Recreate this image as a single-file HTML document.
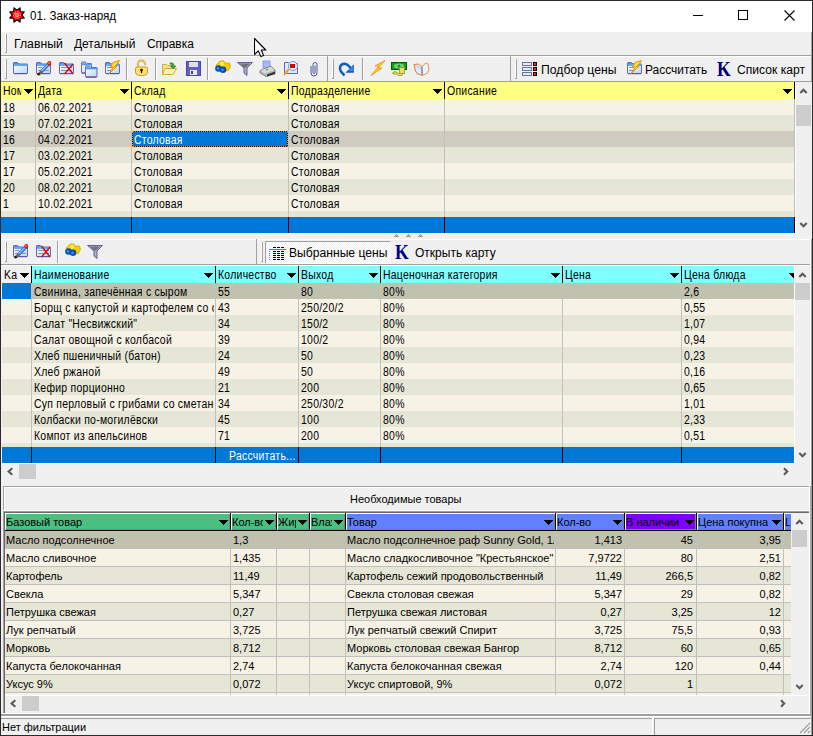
<!DOCTYPE html>
<html><head><meta charset="utf-8"><title>01. Заказ-наряд</title>
<style>
html,body{margin:0;padding:0;}
body{width:813px;height:736px;overflow:hidden;position:relative;background:#F0F0F0;font-family:'Liberation Sans', sans-serif;}
body>div{position:absolute;}
.t{position:absolute;white-space:nowrap;}
</style></head><body>
<div style="left:0px;top:0px;width:813px;height:736px;background:#F0F0F0;"></div>
<div style="left:1px;top:1px;width:811px;height:31px;background:#FFFFFF;"></div>
<svg style="position:absolute;left:8.5px;top:6.5px" width="16" height="16" viewBox="0 0 16 16"><polygon points="8.00,3.10 10.95,0.89 11.46,4.54 15.11,5.05 12.90,8.00 15.11,10.95 11.46,11.46 10.95,15.11 8.00,12.90 5.05,15.11 4.54,11.46 0.89,10.95 3.10,8.00 0.89,5.05 4.54,4.54 5.05,0.89" fill="#FF0000" stroke="#000" stroke-width="1.1" stroke-linejoin="miter"/>
<circle cx="8" cy="8" r="3.3" fill="none" stroke="#fff" stroke-width="0.9" stroke-dasharray="1.1 1.1"/>
<rect x="6.8" y="6.8" width="2.4" height="2.4" fill="none" stroke="#fff" stroke-width="0.8"/></svg>
<div class="t" style="left:30px;top:5.67px;font-size:12.5px;line-height:20px;color:#000;text-align:left;font-family:'Liberation Sans', sans-serif;transform:scaleX(0.93);transform-origin:left top;">01. Заказ-наряд</div>
<div style="left:693px;top:15px;width:10px;height:1px;background:#000;"></div>
<div style="left:738px;top:10px;width:10px;height:10px;background:transparent;box-sizing:border-box;border:1px solid #000;"></div>
<svg style="position:absolute;left:784px;top:10px" width="11" height="11" viewBox="0 0 11 11"><path d="M0.5 0.5 L10.5 10.5 M10.5 0.5 L0.5 10.5" stroke="#000" stroke-width="1.1"/></svg>
<div style="left:5px;top:34px;width:1px;height:19px;background:#FFFFFF;"></div>
<div style="left:6px;top:34px;width:1px;height:19px;background:#A0A0A0;"></div>
<div style="left:5px;top:52px;width:2px;height:1px;background:#A0A0A0;"></div>
<div class="t" style="left:14px;top:33.67px;font-size:12.5px;line-height:20px;color:#000;text-align:left;font-family:'Liberation Sans', sans-serif;transform:scaleX(0.98);transform-origin:left top;">Главный</div>
<div class="t" style="left:74px;top:33.67px;font-size:12.5px;line-height:20px;color:#000;text-align:left;font-family:'Liberation Sans', sans-serif;transform:scaleX(0.955);transform-origin:left top;">Детальный</div>
<div class="t" style="left:147px;top:33.67px;font-size:12.5px;line-height:20px;color:#000;text-align:left;font-family:'Liberation Sans', sans-serif;transform:scaleX(0.955);transform-origin:left top;">Справка</div>
<div style="left:1px;top:55px;width:811px;height:1px;background:#A0A0A0;"></div>
<div style="left:1px;top:56px;width:811px;height:1px;background:#FFFFFF;"></div>
<div style="left:5px;top:59px;width:1px;height:20px;background:#FFFFFF;"></div>
<div style="left:6px;top:59px;width:1px;height:20px;background:#A0A0A0;"></div>
<div style="left:5px;top:78px;width:2px;height:1px;background:#A0A0A0;"></div>
<svg style="position:absolute;left:12px;top:60px" width="16" height="16" viewBox="0 0 16 16"><defs><linearGradient id="fg" x1="0" y1="0" x2="1" y2="1"><stop offset="0" stop-color="#FFFFFF"/><stop offset="1" stop-color="#B8D8F4"/></linearGradient></defs><path d="M1.5 5 V3 Q1.5 2.5 2 2.5 H5.5 L7 4 H15.0 Q15.5 4 15.5 4.5 V13 Q15.5 13.5 15.0 13.5 H2 Q1.5 13.5 1.5 13 Z" fill="url(#fg)" stroke="#6A64B8" stroke-width="1"/><rect x="2" y="3" width="4" height="1.2" fill="#4A98F4"/><rect x="2" y="4.2" width="14" height="1.6" fill="#4A98F4"/><path d="M2 13.6 H15.0" stroke="#5A54A8" stroke-width="1.2"/></svg>
<svg style="position:absolute;left:35px;top:60px" width="16" height="16" viewBox="0 0 16 16"><defs><linearGradient id="fg" x1="0" y1="0" x2="1" y2="1"><stop offset="0" stop-color="#FFFFFF"/><stop offset="1" stop-color="#B8D8F4"/></linearGradient></defs><path d="M1.5 5 V3 Q1.5 2.5 2 2.5 H5.5 L7 4 H15.0 Q15.5 4 15.5 4.5 V13 Q15.5 13.5 15.0 13.5 H2 Q1.5 13.5 1.5 13 Z" fill="url(#fg)" stroke="#6A64B8" stroke-width="1"/><rect x="2" y="3" width="4" height="1.2" fill="#4A98F4"/><rect x="2" y="4.2" width="14" height="1.6" fill="#4A98F4"/><path d="M2 13.6 H15.0" stroke="#5A54A8" stroke-width="1.2"/><path d="M3 7.5h4M3 10.5h4M10 10.5h4" stroke="#909090" stroke-width="1"/><path d="M6 12 L14 4" stroke="#3A78D8" stroke-width="3.4"/><path d="M6.3 11.2 L13.6 3.9" stroke="#8CC0F8" stroke-width="1.2"/><path d="M4 14 L6.5 11.5" stroke="#806030" stroke-width="2.6"/><circle cx="3.6" cy="14.2" r="1.3" fill="#202020"/><circle cx="14.5" cy="3.3" r="2.3" fill="#D81808"/><circle cx="14" cy="3" r="0.9" fill="#FF8040"/></svg>
<svg style="position:absolute;left:58px;top:60px" width="16" height="16" viewBox="0 0 16 16"><defs><linearGradient id="fg" x1="0" y1="0" x2="1" y2="1"><stop offset="0" stop-color="#FFFFFF"/><stop offset="1" stop-color="#B8D8F4"/></linearGradient></defs><path d="M1.5 5 V3 Q1.5 2.5 2 2.5 H5.5 L7 4 H15.0 Q15.5 4 15.5 4.5 V13 Q15.5 13.5 15.0 13.5 H2 Q1.5 13.5 1.5 13 Z" fill="url(#fg)" stroke="#6A64B8" stroke-width="1"/><rect x="2" y="3" width="4" height="1.2" fill="#4A98F4"/><rect x="2" y="4.2" width="14" height="1.6" fill="#4A98F4"/><path d="M2 13.6 H15.0" stroke="#5A54A8" stroke-width="1.2"/><path d="M3 7.5h11M3 10.5h11" stroke="#909090" stroke-width="1"/><path d="M6.5 3 L15 14 M15 4 L6.5 14" stroke="#E80000" stroke-width="1.3"/></svg>
<svg style="position:absolute;left:80px;top:60px" width="18" height="19" viewBox="0 0 18 19"><defs><linearGradient id="fg" x1="0" y1="0" x2="1" y2="1"><stop offset="0" stop-color="#FFFFFF"/><stop offset="1" stop-color="#B8D8F4"/></linearGradient></defs><path d="M1.5 4.5 V2.5 Q1.5 2.0 2 2.0 H5.5 L7 3.5 H11.0 Q11.5 3.5 11.5 4.0 V12.5 Q11.5 13.0 11.0 13.0 H2 Q1.5 13.0 1.5 12.5 Z" fill="url(#fg)" stroke="#6A64B8" stroke-width="1"/><rect x="2" y="2.5" width="4" height="1.2" fill="#4A98F4"/><rect x="2" y="3.7" width="10" height="1.6" fill="#4A98F4"/><path d="M2 13.1 H11.0" stroke="#5A54A8" stroke-width="1.2"/><path d="M5.5 8.5 V6.5 Q5.5 6.0 6 6.0 H9.5 L11 7.5 H16.5 Q17.0 7.5 17.0 8.0 V16.5 Q17.0 17.0 16.5 17.0 H6 Q5.5 17.0 5.5 16.5 Z" fill="url(#fg)" stroke="#6A64B8" stroke-width="1"/><rect x="6" y="6.5" width="4" height="1.2" fill="#4A98F4"/><rect x="6" y="7.7" width="11.5" height="1.6" fill="#4A98F4"/><path d="M6 17.1 H16.5" stroke="#5A54A8" stroke-width="1.2"/></svg>
<svg style="position:absolute;left:104px;top:60px" width="16" height="16" viewBox="0 0 16 16"><defs><linearGradient id="fg" x1="0" y1="0" x2="1" y2="1"><stop offset="0" stop-color="#FFFFFF"/><stop offset="1" stop-color="#B8D8F4"/></linearGradient></defs><path d="M1.5 5 V3 Q1.5 2.5 2 2.5 H5.5 L7 4 H15.0 Q15.5 4 15.5 4.5 V13 Q15.5 13.5 15.0 13.5 H2 Q1.5 13.5 1.5 13 Z" fill="url(#fg)" stroke="#6A64B8" stroke-width="1"/><rect x="2" y="3" width="4" height="1.2" fill="#4A98F4"/><rect x="2" y="4.2" width="14" height="1.6" fill="#4A98F4"/><path d="M2 13.6 H15.0" stroke="#5A54A8" stroke-width="1.2"/><path d="M3 7.5h5M3 10.5h5" stroke="#909090" stroke-width="1"/><polygon points="15.5,0.5 9,2.5 6.5,7 9.5,7 5,13.5 13,6.5 10.5,6.5 14,3" fill="#FFE820" stroke="#F08A10" stroke-width="1"/></svg>
<div style="left:126px;top:58px;width:1px;height:22px;background:#A0A0A0;"></div>
<div style="left:127px;top:58px;width:1px;height:22px;background:#FFFFFF;"></div>
<svg style="position:absolute;left:133px;top:59px" width="17" height="18" viewBox="0 0 17 18"><path d="M5 8 V5 a3.5 3.5 0 0 1 7 0 V6" fill="none" stroke="#C89A20" stroke-width="2"/><path d="M5 8 V5 a3.5 3.5 0 0 1 7 0 V6" fill="none" stroke="#FFE890" stroke-width="0.8"/><path d="M2.5 9.5 Q2.5 8 4 8 H13 Q14.5 8 14.5 9.5 V13 Q14.5 16.5 8.5 16.5 Q2.5 16.5 2.5 13 Z" fill="#FFE070" stroke="#C89A20" stroke-width="1"/><circle cx="8.5" cy="11" r="1.3" fill="#000"/><rect x="7.9" y="11" width="1.2" height="3" fill="#000"/></svg>
<div style="left:155px;top:58px;width:1px;height:22px;background:#A0A0A0;"></div>
<div style="left:156px;top:58px;width:1px;height:22px;background:#FFFFFF;"></div>
<svg style="position:absolute;left:161px;top:60px" width="16" height="16" viewBox="0 0 16 16"><path d="M1.5 4.5 h4 l1 1 h5 v9 h-10 z" fill="#F8E090" stroke="#C8B040" stroke-width="1"/><path d="M1.5 14.5 L4 8.5 H15.5 L12 14.5 Z" fill="#FFF0B0" stroke="#C8B040" stroke-width="1"/><path d="M9 3 Q13 2 13 6 L15 6 L12 9 L9.5 6 L11 6 Q11 4 9 4 Z" fill="#30B030" stroke="#208020" stroke-width="0.6"/></svg>
<svg style="position:absolute;left:185px;top:60px" width="16" height="16" viewBox="0 0 16 16"><rect x="1.5" y="1.5" width="14" height="14" fill="#6060C8" stroke="#4848A0" stroke-width="1"/><rect x="4" y="2" width="9" height="5" fill="#E0E0E8"/><rect x="5" y="10" width="7" height="5" fill="#E8E8F0"/><rect x="6" y="11" width="2" height="3" fill="#404090"/></svg>
<div style="left:207px;top:58px;width:1px;height:22px;background:#A0A0A0;"></div>
<div style="left:208px;top:58px;width:1px;height:22px;background:#FFFFFF;"></div>
<svg style="position:absolute;left:212px;top:58px" width="20" height="20" viewBox="0 0 20 20"><path d="M4 7 L8 3 H12 L13 5 H17.5 L18.5 8 L16.5 12.5 L11 13 L5 10 Z" fill="#F5CC00" stroke="#D0A000" stroke-width="0.7"/><path d="M8 4 H11.5 L12 7 L9 8 Z" fill="#FFF060"/><circle cx="6.5" cy="10.5" r="3.3" fill="#0E4AA8"/><circle cx="11" cy="11.8" r="3.3" fill="#0E4AA8"/><circle cx="6" cy="10.5" r="1.4" fill="#2A90F0"/><circle cx="10.5" cy="12" r="1.4" fill="#2A90F0"/></svg>
<svg style="position:absolute;left:237px;top:61px" width="16" height="15" viewBox="0 0 16 15"><path d="M0.5 1.5 H15.5 L10 7 V14.5 L7 12 V7 Z" fill="#B0B0B8" stroke="#6060A0" stroke-width="1"/><path d="M3 2.5 H13 L9 6.5 H7 Z" fill="#707078"/></svg>
<svg style="position:absolute;left:259px;top:59px" width="17" height="18" viewBox="0 0 17 18"><rect x="4" y="2" width="7" height="7" fill="#A8B8F8" stroke="#8090D8" stroke-width="0.8"/><polygon points="1,11.5 12,7 16,11 16,15 7,17.5 1,14" fill="#B8B8B8" stroke="#707070" stroke-width="0.8"/><polygon points="1.5,11.5 12,7.5 15.5,11 6,14.5" fill="#D8D8D8"/><polygon points="8,15.5 16,12.5 16,14.8 8,17.5" fill="#303030"/><circle cx="8" cy="10.5" r="0.9" fill="#30C030"/></svg>
<svg style="position:absolute;left:283px;top:59px" width="16" height="17" viewBox="0 0 16 17"><path d="M1.5 3.5 h4 l1 1 h8 v10 h-13 z" fill="#DDEBFF" stroke="#6464B4" stroke-width="1"/><circle cx="10" cy="7" r="4.5" fill="#E8F4FF" stroke="#5AA0E8" stroke-width="1"/><rect x="7" y="5" width="5" height="4" fill="#E00000"/><path d="M1 16 L6 10" stroke="#F0A020" stroke-width="2"/></svg>
<svg style="position:absolute;left:309px;top:60px" width="11" height="17" viewBox="0 0 11 17"><path d="M6 5.5 V12.5 a1 1 0 0 1 -2 0 V4.5 a2 2 0 0 1 4 0 V13 a3 3 0 0 1 -6 0 V6" fill="none" stroke="#4A5A98" stroke-width="1"/></svg>
<div style="left:327px;top:56px;width:1px;height:25px;background:#A0A0A0;"></div>
<div style="left:332px;top:59px;width:1px;height:20px;background:#FFFFFF;"></div>
<div style="left:333px;top:59px;width:1px;height:20px;background:#A0A0A0;"></div>
<div style="left:332px;top:78px;width:2px;height:1px;background:#A0A0A0;"></div>
<svg style="position:absolute;left:336px;top:58px" width="20" height="20" viewBox="0 0 20 20"><path d="M8.5 17.5 L5 13.5 Q3.3 11 4.2 8.5 Q5.5 5.8 8.5 5.8 Q10.8 5.8 12.8 8 L14.5 10" fill="none" stroke="#0A5AD0" stroke-width="2.6"/><polygon points="17.8,6.3 17.8,14.7 9.3,14.7" fill="#0A5AD0"/><polygon points="16.8,8 16.8,13 12,13" fill="#3A8AF0"/></svg>
<div style="left:362px;top:58px;width:1px;height:22px;background:#A0A0A0;"></div>
<div style="left:363px;top:58px;width:1px;height:22px;background:#FFFFFF;"></div>
<svg style="position:absolute;left:370px;top:60px" width="16" height="16" viewBox="0 0 16 16"><path d="M15 0.5 L5 6 L9 6 L1 15.5 L12 8 L8 8 Z" fill="#FFD800" stroke="#F09020" stroke-width="0.9"/></svg>
<svg style="position:absolute;left:391px;top:60px" width="17" height="16" viewBox="0 0 17 16"><rect x="0.5" y="2.5" width="15" height="7" fill="#10A010" stroke="#006000" stroke-width="1"/><ellipse cx="8" cy="6" rx="5" ry="2.5" fill="#60E060"/><circle cx="8" cy="6" r="1.5" fill="#606060"/><rect x="8.5" y="7.5" width="5" height="6" fill="#E8E060" stroke="#909020" stroke-width="0.8"/><ellipse cx="4" cy="13" rx="2.5" ry="1.2" fill="#E8E060" stroke="#909020" stroke-width="0.8"/><ellipse cx="9" cy="14.5" rx="2.5" ry="1.2" fill="#E8E060" stroke="#909020" stroke-width="0.8"/></svg>
<svg style="position:absolute;left:413px;top:60px" width="17" height="17" viewBox="0 0 17 17"><path d="M1 4.5 L5.5 4 L9 7 L9.5 15.5 L4 13.5 L2.5 11 Z" fill="#D8ECFC" stroke="#F07828" stroke-width="1"/><path d="M9 7 L12.5 3 L15 4 L16 9 L14.5 13 L9.5 15.5 Z" fill="#EAF4FE" stroke="#F49040" stroke-width="1"/><path d="M9 7.5 V15" stroke="#5A8AD8" stroke-width="1"/><path d="M2.5 6 L8 8.5" stroke="#B0D0F0" stroke-width="1"/></svg>
<div style="left:510px;top:56px;width:1px;height:25px;background:#A0A0A0;"></div>
<div style="left:515px;top:59px;width:1px;height:20px;background:#FFFFFF;"></div>
<div style="left:516px;top:59px;width:1px;height:20px;background:#A0A0A0;"></div>
<div style="left:515px;top:78px;width:2px;height:1px;background:#A0A0A0;"></div>
<svg style="position:absolute;left:521px;top:60px" width="17" height="16" viewBox="0 0 17 16"><rect x="1.5" y="2.5" width="9" height="3" fill="#DDEEFF" stroke="#7070A8" stroke-width="1"/><rect x="1.5" y="7.5" width="9" height="3" fill="#DDEEFF" stroke="#7070A8" stroke-width="1"/><rect x="1.5" y="12.5" width="9" height="3" fill="#DDEEFF" stroke="#7070A8" stroke-width="1"/><rect x="12" y="2" width="4" height="4" fill="#000"/><rect x="12" y="7" width="4" height="4" fill="#000"/><rect x="12" y="12" width="4" height="4" fill="#000"/><circle cx="14" cy="4" r="1.2" fill="#FF3000"/><circle cx="14" cy="9" r="1.2" fill="#FF3000"/><circle cx="14" cy="14" r="1.2" fill="#FF3000"/></svg>
<div class="t" style="left:541px;top:59.67px;font-size:12.5px;line-height:20px;color:#000;text-align:left;font-family:'Liberation Sans', sans-serif;transform:scaleX(0.975);transform-origin:left top;">Подбор цены</div>
<svg style="position:absolute;left:626px;top:60px" width="16" height="16" viewBox="0 0 16 16"><defs><linearGradient id="fg" x1="0" y1="0" x2="1" y2="1"><stop offset="0" stop-color="#FFFFFF"/><stop offset="1" stop-color="#B8D8F4"/></linearGradient></defs><path d="M1.5 5 V3 Q1.5 2.5 2 2.5 H5.5 L7 4 H15.0 Q15.5 4 15.5 4.5 V13 Q15.5 13.5 15.0 13.5 H2 Q1.5 13.5 1.5 13 Z" fill="url(#fg)" stroke="#6A64B8" stroke-width="1"/><rect x="2" y="3" width="4" height="1.2" fill="#4A98F4"/><rect x="2" y="4.2" width="14" height="1.6" fill="#4A98F4"/><path d="M2 13.6 H15.0" stroke="#5A54A8" stroke-width="1.2"/><path d="M3 7.5h5M3 10.5h5" stroke="#909090" stroke-width="1"/><polygon points="15.5,0.5 9,2.5 6.5,7 9.5,7 5,13.5 13,6.5 10.5,6.5 14,3" fill="#FFE820" stroke="#F08A10" stroke-width="1"/></svg>
<div class="t" style="left:645px;top:59.67px;font-size:12.5px;line-height:20px;color:#000;text-align:left;font-family:'Liberation Sans', sans-serif;transform:scaleX(0.955);transform-origin:left top;">Рассчитать</div>
<div class="t" style="left:717px;top:58.72px;font-size:21px;line-height:20px;color:#000080;text-align:left;font-family:'Liberation Serif', serif;transform:scaleX(0.84);transform-origin:left top;font-weight:bold;">K</div>
<div class="t" style="left:737px;top:59.67px;font-size:12.5px;line-height:20px;color:#000;text-align:left;font-family:'Liberation Sans', sans-serif;transform:scaleX(0.97);transform-origin:left top;">Список карт</div>
<div style="left:1px;top:81px;width:811px;height:1px;background:#A0A0A0;"></div>
<div style="left:1px;top:82px;width:794px;height:17px;background:#FFFF80;"></div>
<div style="left:1px;top:99px;width:794px;height:16px;background:#F6F2E6;"></div>
<div style="left:1px;top:115px;width:794px;height:16px;background:#E6E6D6;"></div>
<div style="left:1px;top:131px;width:794px;height:16px;background:#CFCBC0;"></div>
<div style="left:1px;top:147px;width:794px;height:16px;background:#E6E6D6;"></div>
<div style="left:1px;top:163px;width:794px;height:16px;background:#F6F2E6;"></div>
<div style="left:1px;top:179px;width:794px;height:16px;background:#E6E6D6;"></div>
<div style="left:1px;top:195px;width:794px;height:16px;background:#F6F2E6;"></div>
<div style="left:1px;top:211px;width:794px;height:6px;background:#E6E6D6;"></div>
<div style="left:1px;top:217px;width:794px;height:16px;background:#0078D7;"></div>
<div style="left:35px;top:82px;width:1px;height:17px;background:#000;"></div>
<div style="left:131px;top:82px;width:1px;height:17px;background:#000;"></div>
<div style="left:288px;top:82px;width:1px;height:17px;background:#000;"></div>
<div style="left:444px;top:82px;width:1px;height:17px;background:#000;"></div>
<div style="left:794px;top:82px;width:1px;height:17px;background:#000;"></div>
<div style="left:35px;top:99px;width:1px;height:118px;background:#C0C0C0;"></div>
<div style="left:35px;top:217px;width:1px;height:16px;background:#000;"></div>
<div style="left:131px;top:99px;width:1px;height:118px;background:#C0C0C0;"></div>
<div style="left:131px;top:217px;width:1px;height:16px;background:#000;"></div>
<div style="left:288px;top:99px;width:1px;height:118px;background:#C0C0C0;"></div>
<div style="left:288px;top:217px;width:1px;height:16px;background:#000;"></div>
<div style="left:444px;top:99px;width:1px;height:118px;background:#C0C0C0;"></div>
<div style="left:444px;top:217px;width:1px;height:16px;background:#000;"></div>
<div class="t" style="left:3px;top:80.84px;font-size:12px;line-height:20px;color:#000;text-align:left;font-family:'Liberation Sans', sans-serif;transform:scaleX(0.87);transform-origin:left top;letter-spacing:0.3px;width:21px;overflow:hidden;">Ном</div>
<div class="t" style="left:38px;top:80.84px;font-size:12px;line-height:20px;color:#000;text-align:left;font-family:'Liberation Sans', sans-serif;transform:scaleX(0.87);transform-origin:left top;letter-spacing:0.3px;">Дата</div>
<div class="t" style="left:134px;top:80.84px;font-size:12px;line-height:20px;color:#000;text-align:left;font-family:'Liberation Sans', sans-serif;transform:scaleX(0.87);transform-origin:left top;letter-spacing:0.3px;">Склад</div>
<div class="t" style="left:291px;top:80.84px;font-size:12px;line-height:20px;color:#000;text-align:left;font-family:'Liberation Sans', sans-serif;transform:scaleX(0.87);transform-origin:left top;letter-spacing:0.3px;">Подразделение</div>
<div class="t" style="left:447px;top:80.84px;font-size:12px;line-height:20px;color:#000;text-align:left;font-family:'Liberation Sans', sans-serif;transform:scaleX(0.87);transform-origin:left top;letter-spacing:0.3px;">Описание</div>
<svg style="position:absolute;left:24px;top:89px" width="9" height="5" viewBox="0 0 9 5" shape-rendering="crispEdges"><path d="M0 0h9v1h-1v1h-1v1h-1v1h-1v1h-1v-1h-1v-1h-1v-1h-1v-1h-1z" fill="#000"/></svg>
<svg style="position:absolute;left:120px;top:89px" width="9" height="5" viewBox="0 0 9 5" shape-rendering="crispEdges"><path d="M0 0h9v1h-1v1h-1v1h-1v1h-1v1h-1v-1h-1v-1h-1v-1h-1v-1h-1z" fill="#000"/></svg>
<svg style="position:absolute;left:277px;top:89px" width="9" height="5" viewBox="0 0 9 5" shape-rendering="crispEdges"><path d="M0 0h9v1h-1v1h-1v1h-1v1h-1v1h-1v-1h-1v-1h-1v-1h-1v-1h-1z" fill="#000"/></svg>
<svg style="position:absolute;left:433px;top:89px" width="9" height="5" viewBox="0 0 9 5" shape-rendering="crispEdges"><path d="M0 0h9v1h-1v1h-1v1h-1v1h-1v1h-1v-1h-1v-1h-1v-1h-1v-1h-1z" fill="#000"/></svg>
<svg style="position:absolute;left:783px;top:89px" width="9" height="5" viewBox="0 0 9 5" shape-rendering="crispEdges"><path d="M0 0h9v1h-1v1h-1v1h-1v1h-1v1h-1v-1h-1v-1h-1v-1h-1v-1h-1z" fill="#000"/></svg>
<div class="t" style="left:3px;top:97.84px;font-size:12px;line-height:20px;color:#000;text-align:left;font-family:'Liberation Sans', sans-serif;transform:scaleX(0.87);transform-origin:left top;letter-spacing:0.3px;">18</div>
<div class="t" style="left:38px;top:97.84px;font-size:12px;line-height:20px;color:#000;text-align:left;font-family:'Liberation Sans', sans-serif;transform:scaleX(0.87);transform-origin:left top;letter-spacing:0.3px;">06.02.2021</div>
<div class="t" style="left:134px;top:97.84px;font-size:12px;line-height:20px;color:#000;text-align:left;font-family:'Liberation Sans', sans-serif;transform:scaleX(0.87);transform-origin:left top;letter-spacing:0.3px;">Столовая</div>
<div class="t" style="left:291px;top:97.84px;font-size:12px;line-height:20px;color:#000;text-align:left;font-family:'Liberation Sans', sans-serif;transform:scaleX(0.87);transform-origin:left top;letter-spacing:0.3px;">Столовая</div>
<div class="t" style="left:3px;top:113.84px;font-size:12px;line-height:20px;color:#000;text-align:left;font-family:'Liberation Sans', sans-serif;transform:scaleX(0.87);transform-origin:left top;letter-spacing:0.3px;">19</div>
<div class="t" style="left:38px;top:113.84px;font-size:12px;line-height:20px;color:#000;text-align:left;font-family:'Liberation Sans', sans-serif;transform:scaleX(0.87);transform-origin:left top;letter-spacing:0.3px;">07.02.2021</div>
<div class="t" style="left:134px;top:113.84px;font-size:12px;line-height:20px;color:#000;text-align:left;font-family:'Liberation Sans', sans-serif;transform:scaleX(0.87);transform-origin:left top;letter-spacing:0.3px;">Столовая</div>
<div class="t" style="left:291px;top:113.84px;font-size:12px;line-height:20px;color:#000;text-align:left;font-family:'Liberation Sans', sans-serif;transform:scaleX(0.87);transform-origin:left top;letter-spacing:0.3px;">Столовая</div>
<div class="t" style="left:3px;top:129.84px;font-size:12px;line-height:20px;color:#000;text-align:left;font-family:'Liberation Sans', sans-serif;transform:scaleX(0.87);transform-origin:left top;letter-spacing:0.3px;">16</div>
<div class="t" style="left:38px;top:129.84px;font-size:12px;line-height:20px;color:#000;text-align:left;font-family:'Liberation Sans', sans-serif;transform:scaleX(0.87);transform-origin:left top;letter-spacing:0.3px;">04.02.2021</div>
<div style="left:132px;top:131px;width:156px;height:16px;background:#000;"></div>
<div style="left:133px;top:132px;width:154px;height:14px;background:#0078D7;"></div>
<div style="left:132px;top:131px;width:156px;height:16px;background:transparent;box-sizing:border-box;border:1px dotted #FF8A20;"></div>
<div class="t" style="left:134px;top:129.84px;font-size:12px;line-height:20px;color:#FFFFFF;text-align:left;font-family:'Liberation Sans', sans-serif;transform:scaleX(0.87);transform-origin:left top;letter-spacing:0.3px;">Столовая</div>
<div class="t" style="left:291px;top:129.84px;font-size:12px;line-height:20px;color:#000;text-align:left;font-family:'Liberation Sans', sans-serif;transform:scaleX(0.87);transform-origin:left top;letter-spacing:0.3px;">Столовая</div>
<div class="t" style="left:3px;top:145.84px;font-size:12px;line-height:20px;color:#000;text-align:left;font-family:'Liberation Sans', sans-serif;transform:scaleX(0.87);transform-origin:left top;letter-spacing:0.3px;">17</div>
<div class="t" style="left:38px;top:145.84px;font-size:12px;line-height:20px;color:#000;text-align:left;font-family:'Liberation Sans', sans-serif;transform:scaleX(0.87);transform-origin:left top;letter-spacing:0.3px;">03.02.2021</div>
<div class="t" style="left:134px;top:145.84px;font-size:12px;line-height:20px;color:#000;text-align:left;font-family:'Liberation Sans', sans-serif;transform:scaleX(0.87);transform-origin:left top;letter-spacing:0.3px;">Столовая</div>
<div class="t" style="left:291px;top:145.84px;font-size:12px;line-height:20px;color:#000;text-align:left;font-family:'Liberation Sans', sans-serif;transform:scaleX(0.87);transform-origin:left top;letter-spacing:0.3px;">Столовая</div>
<div class="t" style="left:3px;top:161.84px;font-size:12px;line-height:20px;color:#000;text-align:left;font-family:'Liberation Sans', sans-serif;transform:scaleX(0.87);transform-origin:left top;letter-spacing:0.3px;">17</div>
<div class="t" style="left:38px;top:161.84px;font-size:12px;line-height:20px;color:#000;text-align:left;font-family:'Liberation Sans', sans-serif;transform:scaleX(0.87);transform-origin:left top;letter-spacing:0.3px;">05.02.2021</div>
<div class="t" style="left:134px;top:161.84px;font-size:12px;line-height:20px;color:#000;text-align:left;font-family:'Liberation Sans', sans-serif;transform:scaleX(0.87);transform-origin:left top;letter-spacing:0.3px;">Столовая</div>
<div class="t" style="left:291px;top:161.84px;font-size:12px;line-height:20px;color:#000;text-align:left;font-family:'Liberation Sans', sans-serif;transform:scaleX(0.87);transform-origin:left top;letter-spacing:0.3px;">Столовая</div>
<div class="t" style="left:3px;top:177.84px;font-size:12px;line-height:20px;color:#000;text-align:left;font-family:'Liberation Sans', sans-serif;transform:scaleX(0.87);transform-origin:left top;letter-spacing:0.3px;">20</div>
<div class="t" style="left:38px;top:177.84px;font-size:12px;line-height:20px;color:#000;text-align:left;font-family:'Liberation Sans', sans-serif;transform:scaleX(0.87);transform-origin:left top;letter-spacing:0.3px;">08.02.2021</div>
<div class="t" style="left:134px;top:177.84px;font-size:12px;line-height:20px;color:#000;text-align:left;font-family:'Liberation Sans', sans-serif;transform:scaleX(0.87);transform-origin:left top;letter-spacing:0.3px;">Столовая</div>
<div class="t" style="left:291px;top:177.84px;font-size:12px;line-height:20px;color:#000;text-align:left;font-family:'Liberation Sans', sans-serif;transform:scaleX(0.87);transform-origin:left top;letter-spacing:0.3px;">Столовая</div>
<div class="t" style="left:3px;top:193.84px;font-size:12px;line-height:20px;color:#000;text-align:left;font-family:'Liberation Sans', sans-serif;transform:scaleX(0.87);transform-origin:left top;letter-spacing:0.3px;">1</div>
<div class="t" style="left:38px;top:193.84px;font-size:12px;line-height:20px;color:#000;text-align:left;font-family:'Liberation Sans', sans-serif;transform:scaleX(0.87);transform-origin:left top;letter-spacing:0.3px;">10.02.2021</div>
<div class="t" style="left:134px;top:193.84px;font-size:12px;line-height:20px;color:#000;text-align:left;font-family:'Liberation Sans', sans-serif;transform:scaleX(0.87);transform-origin:left top;letter-spacing:0.3px;">Столовая</div>
<div class="t" style="left:291px;top:193.84px;font-size:12px;line-height:20px;color:#000;text-align:left;font-family:'Liberation Sans', sans-serif;transform:scaleX(0.87);transform-origin:left top;letter-spacing:0.3px;">Столовая</div>
<div style="left:795px;top:82px;width:17px;height:151px;background:#F0F0F0;"></div>
<svg style="position:absolute;left:799px;top:88px" width="9" height="6" viewBox="0 0 9 6"><path d="M1.3 5 L4.5 1.8 L7.7 5" fill="none" stroke="#5A5A5A" stroke-width="2.1"/></svg>
<svg style="position:absolute;left:799px;top:222px" width="9" height="6" viewBox="0 0 9 6"><path d="M1.3 1 L4.5 4.2 L7.7 1" fill="none" stroke="#5A5A5A" stroke-width="2.1"/></svg>
<div style="left:796px;top:105px;width:15px;height:21px;background:#CDCDCD;"></div>
<div style="left:795px;top:82px;width:1px;height:151px;background:#FCFCFC;"></div>
<div style="left:1px;top:239px;width:811px;height:1px;background:#FFFFFF;"></div>
<svg style="position:absolute;left:394px;top:234px" width="5" height="3" viewBox="0 0 5 3" shape-rendering="crispEdges"><path d="M2 0h1v1h1v1h1v1h-5v-1h1v-1h1z" fill="#A0A0A0"/></svg>
<svg style="position:absolute;left:406px;top:234px" width="5" height="3" viewBox="0 0 5 3" shape-rendering="crispEdges"><path d="M2 0h1v1h1v1h1v1h-5v-1h1v-1h1z" fill="#A0A0A0"/></svg>
<svg style="position:absolute;left:418px;top:234px" width="5" height="3" viewBox="0 0 5 3" shape-rendering="crispEdges"><path d="M2 0h1v1h1v1h1v1h-5v-1h1v-1h1z" fill="#A0A0A0"/></svg>
<div style="left:5px;top:242px;width:1px;height:20px;background:#FFFFFF;"></div>
<div style="left:6px;top:242px;width:1px;height:20px;background:#A0A0A0;"></div>
<div style="left:5px;top:261px;width:2px;height:1px;background:#A0A0A0;"></div>
<svg style="position:absolute;left:12px;top:243px" width="16" height="16" viewBox="0 0 16 16"><defs><linearGradient id="fg" x1="0" y1="0" x2="1" y2="1"><stop offset="0" stop-color="#FFFFFF"/><stop offset="1" stop-color="#B8D8F4"/></linearGradient></defs><path d="M1.5 5 V3 Q1.5 2.5 2 2.5 H5.5 L7 4 H15.0 Q15.5 4 15.5 4.5 V13 Q15.5 13.5 15.0 13.5 H2 Q1.5 13.5 1.5 13 Z" fill="url(#fg)" stroke="#6A64B8" stroke-width="1"/><rect x="2" y="3" width="4" height="1.2" fill="#4A98F4"/><rect x="2" y="4.2" width="14" height="1.6" fill="#4A98F4"/><path d="M2 13.6 H15.0" stroke="#5A54A8" stroke-width="1.2"/><path d="M3 7.5h4M3 10.5h4M10 10.5h4" stroke="#909090" stroke-width="1"/><path d="M6 12 L14 4" stroke="#3A78D8" stroke-width="3.4"/><path d="M6.3 11.2 L13.6 3.9" stroke="#8CC0F8" stroke-width="1.2"/><path d="M4 14 L6.5 11.5" stroke="#806030" stroke-width="2.6"/><circle cx="3.6" cy="14.2" r="1.3" fill="#202020"/><circle cx="14.5" cy="3.3" r="2.3" fill="#D81808"/><circle cx="14" cy="3" r="0.9" fill="#FF8040"/></svg>
<svg style="position:absolute;left:35px;top:243px" width="16" height="16" viewBox="0 0 16 16"><defs><linearGradient id="fg" x1="0" y1="0" x2="1" y2="1"><stop offset="0" stop-color="#FFFFFF"/><stop offset="1" stop-color="#B8D8F4"/></linearGradient></defs><path d="M1.5 5 V3 Q1.5 2.5 2 2.5 H5.5 L7 4 H15.0 Q15.5 4 15.5 4.5 V13 Q15.5 13.5 15.0 13.5 H2 Q1.5 13.5 1.5 13 Z" fill="url(#fg)" stroke="#6A64B8" stroke-width="1"/><rect x="2" y="3" width="4" height="1.2" fill="#4A98F4"/><rect x="2" y="4.2" width="14" height="1.6" fill="#4A98F4"/><path d="M2 13.6 H15.0" stroke="#5A54A8" stroke-width="1.2"/><path d="M3 7.5h11M3 10.5h11" stroke="#909090" stroke-width="1"/><path d="M6.5 3 L15 14 M15 4 L6.5 14" stroke="#E80000" stroke-width="1.3"/></svg>
<div style="left:57px;top:241px;width:1px;height:22px;background:#A0A0A0;"></div>
<div style="left:58px;top:241px;width:1px;height:22px;background:#FFFFFF;"></div>
<svg style="position:absolute;left:62px;top:241px" width="20" height="20" viewBox="0 0 20 20"><path d="M4 7 L8 3 H12 L13 5 H17.5 L18.5 8 L16.5 12.5 L11 13 L5 10 Z" fill="#F5CC00" stroke="#D0A000" stroke-width="0.7"/><path d="M8 4 H11.5 L12 7 L9 8 Z" fill="#FFF060"/><circle cx="6.5" cy="10.5" r="3.3" fill="#0E4AA8"/><circle cx="11" cy="11.8" r="3.3" fill="#0E4AA8"/><circle cx="6" cy="10.5" r="1.4" fill="#2A90F0"/><circle cx="10.5" cy="12" r="1.4" fill="#2A90F0"/></svg>
<svg style="position:absolute;left:87px;top:244px" width="16" height="15" viewBox="0 0 16 15"><path d="M0.5 1.5 H15.5 L10 7 V14.5 L7 12 V7 Z" fill="#B0B0B8" stroke="#6060A0" stroke-width="1"/><path d="M3 2.5 H13 L9 6.5 H7 Z" fill="#707078"/></svg>
<div style="left:256px;top:239px;width:1px;height:26px;background:#A0A0A0;"></div>
<div style="left:261px;top:242px;width:1px;height:20px;background:#FFFFFF;"></div>
<div style="left:262px;top:242px;width:1px;height:20px;background:#A0A0A0;"></div>
<div style="left:261px;top:261px;width:2px;height:1px;background:#A0A0A0;"></div>
<div style="left:265px;top:241px;width:126px;height:23px;background:repeating-conic-gradient(#FFFFFF 0 25%, #F0F0F0 0 50%) 0 0/2px 2px;box-sizing:border-box;border-top:1px solid #A0A0A0;border-left:1px solid #A0A0A0;border-right:1px solid #fff;border-bottom:1px solid #fff;"></div>
<svg style="position:absolute;left:269px;top:246px" width="17" height="16" viewBox="0 0 17 16" shape-rendering="crispEdges"><rect x="0" y="3" width="17" height="1" fill="#3C78D8"/><rect x="4" y="1" width="3" height="1" fill="#000"/><rect x="8" y="1" width="3" height="1" fill="#000"/><rect x="12" y="1" width="3" height="1" fill="#000"/><rect x="4" y="5" width="3" height="1" fill="#000"/><rect x="8" y="5" width="3" height="1" fill="#000"/><rect x="12" y="5" width="3" height="1" fill="#000"/><rect x="0" y="5" width="1" height="1" fill="#3C78D8"/><rect x="4" y="7" width="3" height="1" fill="#000"/><rect x="8" y="7" width="3" height="1" fill="#000"/><rect x="12" y="7" width="3" height="1" fill="#000"/><rect x="0" y="7" width="1" height="1" fill="#3C78D8"/><rect x="4" y="9" width="3" height="1" fill="#000"/><rect x="8" y="9" width="3" height="1" fill="#000"/><rect x="12" y="9" width="3" height="1" fill="#000"/><rect x="0" y="9" width="1" height="1" fill="#3C78D8"/><rect x="4" y="11" width="3" height="1" fill="#000"/><rect x="8" y="11" width="3" height="1" fill="#000"/><rect x="12" y="11" width="3" height="1" fill="#000"/><rect x="0" y="11" width="1" height="1" fill="#3C78D8"/><rect x="4" y="13" width="3" height="1" fill="#000"/><rect x="8" y="13" width="3" height="1" fill="#000"/><rect x="12" y="13" width="3" height="1" fill="#000"/><rect x="0" y="13" width="1" height="1" fill="#3C78D8"/></svg>
<div class="t" style="left:289px;top:242.67px;font-size:12.5px;line-height:20px;color:#000;text-align:left;font-family:'Liberation Sans', sans-serif;transform:scaleX(0.97);transform-origin:left top;">Выбранные цены</div>
<div class="t" style="left:395px;top:241.72px;font-size:21px;line-height:20px;color:#000080;text-align:left;font-family:'Liberation Serif', serif;transform:scaleX(0.84);transform-origin:left top;font-weight:bold;">K</div>
<div class="t" style="left:415px;top:242.67px;font-size:12.5px;line-height:20px;color:#000;text-align:left;font-family:'Liberation Sans', sans-serif;transform:scaleX(0.96);transform-origin:left top;">Открыть карту</div>
<div style="left:1px;top:264px;width:811px;height:1px;background:#A0A0A0;"></div>
<div style="left:1px;top:265px;width:811px;height:1px;background:#FFFFFF;"></div>
<div style="left:2px;top:266px;width:30px;height:17px;background:#F0F0F0;"></div>
<div style="left:32px;top:266px;width:763px;height:17px;background:#80FFFF;"></div>
<div style="left:2px;top:283px;width:793px;height:16px;background:#C1C1B0;"></div>
<div style="left:2px;top:299px;width:793px;height:16px;background:#F6F2E6;"></div>
<div style="left:2px;top:315px;width:793px;height:16px;background:#E6E6D6;"></div>
<div style="left:2px;top:331px;width:793px;height:16px;background:#F6F2E6;"></div>
<div style="left:2px;top:347px;width:793px;height:16px;background:#E6E6D6;"></div>
<div style="left:2px;top:363px;width:793px;height:16px;background:#F6F2E6;"></div>
<div style="left:2px;top:379px;width:793px;height:16px;background:#E6E6D6;"></div>
<div style="left:2px;top:395px;width:793px;height:16px;background:#F6F2E6;"></div>
<div style="left:2px;top:411px;width:793px;height:16px;background:#E6E6D6;"></div>
<div style="left:2px;top:427px;width:793px;height:16px;background:#F6F2E6;"></div>
<div style="left:2px;top:443px;width:793px;height:4px;background:#E6E6D6;"></div>
<div style="left:2px;top:283px;width:29px;height:16px;background:#0078D7;"></div>
<div style="left:2px;top:447px;width:793px;height:16px;background:#0078D7;"></div>
<div style="left:31px;top:266px;width:1px;height:17px;background:#000;"></div>
<div style="left:31px;top:283px;width:1px;height:164px;background:#C0C0C0;"></div>
<div style="left:31px;top:447px;width:1px;height:16px;background:#000;"></div>
<div style="left:215px;top:266px;width:1px;height:17px;background:#000;"></div>
<div style="left:215px;top:283px;width:1px;height:164px;background:#C0C0C0;"></div>
<div style="left:215px;top:447px;width:1px;height:16px;background:#000;"></div>
<div style="left:298px;top:266px;width:1px;height:17px;background:#000;"></div>
<div style="left:298px;top:283px;width:1px;height:164px;background:#C0C0C0;"></div>
<div style="left:298px;top:447px;width:1px;height:16px;background:#000;"></div>
<div style="left:380px;top:266px;width:1px;height:17px;background:#000;"></div>
<div style="left:380px;top:283px;width:1px;height:164px;background:#C0C0C0;"></div>
<div style="left:380px;top:447px;width:1px;height:16px;background:#000;"></div>
<div style="left:562px;top:266px;width:1px;height:17px;background:#000;"></div>
<div style="left:562px;top:283px;width:1px;height:164px;background:#C0C0C0;"></div>
<div style="left:562px;top:447px;width:1px;height:16px;background:#000;"></div>
<div style="left:681px;top:266px;width:1px;height:17px;background:#000;"></div>
<div style="left:681px;top:283px;width:1px;height:164px;background:#C0C0C0;"></div>
<div style="left:681px;top:447px;width:1px;height:16px;background:#000;"></div>
<div class="t" style="left:4px;top:264.84px;font-size:12px;line-height:20px;color:#000;text-align:left;font-family:'Liberation Sans', sans-serif;transform:scaleX(0.87);transform-origin:left top;letter-spacing:0.3px;">Ka</div>
<svg style="position:absolute;left:20px;top:273px" width="9" height="5" viewBox="0 0 9 5" shape-rendering="crispEdges"><path d="M0 0h9v1h-1v1h-1v1h-1v1h-1v1h-1v-1h-1v-1h-1v-1h-1v-1h-1z" fill="#000"/></svg>
<div class="t" style="left:34px;top:264.84px;font-size:12px;line-height:20px;color:#000;text-align:left;font-family:'Liberation Sans', sans-serif;transform:scaleX(0.87);transform-origin:left top;letter-spacing:0.3px;">Наименование</div>
<svg style="position:absolute;left:204px;top:273px" width="9" height="5" viewBox="0 0 9 5" shape-rendering="crispEdges"><path d="M0 0h9v1h-1v1h-1v1h-1v1h-1v1h-1v-1h-1v-1h-1v-1h-1v-1h-1z" fill="#000"/></svg>
<div class="t" style="left:218px;top:264.84px;font-size:12px;line-height:20px;color:#000;text-align:left;font-family:'Liberation Sans', sans-serif;transform:scaleX(0.87);transform-origin:left top;letter-spacing:0.3px;">Количество</div>
<svg style="position:absolute;left:287px;top:273px" width="9" height="5" viewBox="0 0 9 5" shape-rendering="crispEdges"><path d="M0 0h9v1h-1v1h-1v1h-1v1h-1v1h-1v-1h-1v-1h-1v-1h-1v-1h-1z" fill="#000"/></svg>
<div class="t" style="left:301px;top:264.84px;font-size:12px;line-height:20px;color:#000;text-align:left;font-family:'Liberation Sans', sans-serif;transform:scaleX(0.87);transform-origin:left top;letter-spacing:0.3px;">Выход</div>
<svg style="position:absolute;left:369px;top:273px" width="9" height="5" viewBox="0 0 9 5" shape-rendering="crispEdges"><path d="M0 0h9v1h-1v1h-1v1h-1v1h-1v1h-1v-1h-1v-1h-1v-1h-1v-1h-1z" fill="#000"/></svg>
<div class="t" style="left:383px;top:264.84px;font-size:12px;line-height:20px;color:#000;text-align:left;font-family:'Liberation Sans', sans-serif;transform:scaleX(0.87);transform-origin:left top;letter-spacing:0.3px;">Наценочная категория</div>
<svg style="position:absolute;left:551px;top:273px" width="9" height="5" viewBox="0 0 9 5" shape-rendering="crispEdges"><path d="M0 0h9v1h-1v1h-1v1h-1v1h-1v1h-1v-1h-1v-1h-1v-1h-1v-1h-1z" fill="#000"/></svg>
<div class="t" style="left:565px;top:264.84px;font-size:12px;line-height:20px;color:#000;text-align:left;font-family:'Liberation Sans', sans-serif;transform:scaleX(0.87);transform-origin:left top;letter-spacing:0.3px;">Цена</div>
<svg style="position:absolute;left:670px;top:273px" width="9" height="5" viewBox="0 0 9 5" shape-rendering="crispEdges"><path d="M0 0h9v1h-1v1h-1v1h-1v1h-1v1h-1v-1h-1v-1h-1v-1h-1v-1h-1z" fill="#000"/></svg>
<div class="t" style="left:684px;top:264.84px;font-size:12px;line-height:20px;color:#000;text-align:left;font-family:'Liberation Sans', sans-serif;transform:scaleX(0.87);transform-origin:left top;letter-spacing:0.3px;">Цена блюда</div>
<svg style="position:absolute;left:789px;top:273px" width="5" height="5" viewBox="0 0 5 5" shape-rendering="crispEdges"><path d="M0 0h5v5h-1v-1h-1v-1h-1v-1h-1v-1h-1z" fill="#000"/></svg>
<div class="t" style="left:34px;top:281.84px;font-size:12px;line-height:20px;color:#000;text-align:left;font-family:'Liberation Sans', sans-serif;transform:scaleX(0.87);transform-origin:left top;letter-spacing:0.3px;width:206.9px;overflow:hidden;">Свинина, запечённая с сыром</div>
<div class="t" style="left:218px;top:281.84px;font-size:12px;line-height:20px;color:#000;text-align:left;font-family:'Liberation Sans', sans-serif;transform:scaleX(0.87);transform-origin:left top;letter-spacing:0.3px;">55</div>
<div class="t" style="left:301px;top:281.84px;font-size:12px;line-height:20px;color:#000;text-align:left;font-family:'Liberation Sans', sans-serif;transform:scaleX(0.87);transform-origin:left top;letter-spacing:0.3px;">80</div>
<div class="t" style="left:383px;top:281.84px;font-size:12px;line-height:20px;color:#000;text-align:left;font-family:'Liberation Sans', sans-serif;transform:scaleX(0.87);transform-origin:left top;letter-spacing:0.3px;">80%</div>
<div class="t" style="left:684px;top:281.84px;font-size:12px;line-height:20px;color:#000;text-align:left;font-family:'Liberation Sans', sans-serif;transform:scaleX(0.87);transform-origin:left top;letter-spacing:0.3px;">2,6</div>
<div class="t" style="left:34px;top:297.84px;font-size:12px;line-height:20px;color:#000;text-align:left;font-family:'Liberation Sans', sans-serif;transform:scaleX(0.87);transform-origin:left top;letter-spacing:0.3px;width:206.9px;overflow:hidden;">Борщ с капустой и картофелем со сметаной</div>
<div class="t" style="left:218px;top:297.84px;font-size:12px;line-height:20px;color:#000;text-align:left;font-family:'Liberation Sans', sans-serif;transform:scaleX(0.87);transform-origin:left top;letter-spacing:0.3px;">43</div>
<div class="t" style="left:301px;top:297.84px;font-size:12px;line-height:20px;color:#000;text-align:left;font-family:'Liberation Sans', sans-serif;transform:scaleX(0.87);transform-origin:left top;letter-spacing:0.3px;">250/20/2</div>
<div class="t" style="left:383px;top:297.84px;font-size:12px;line-height:20px;color:#000;text-align:left;font-family:'Liberation Sans', sans-serif;transform:scaleX(0.87);transform-origin:left top;letter-spacing:0.3px;">80%</div>
<div class="t" style="left:684px;top:297.84px;font-size:12px;line-height:20px;color:#000;text-align:left;font-family:'Liberation Sans', sans-serif;transform:scaleX(0.87);transform-origin:left top;letter-spacing:0.3px;">0,55</div>
<div class="t" style="left:34px;top:313.84px;font-size:12px;line-height:20px;color:#000;text-align:left;font-family:'Liberation Sans', sans-serif;transform:scaleX(0.87);transform-origin:left top;letter-spacing:0.3px;width:206.9px;overflow:hidden;">Салат &quot;Несвижский&quot;</div>
<div class="t" style="left:218px;top:313.84px;font-size:12px;line-height:20px;color:#000;text-align:left;font-family:'Liberation Sans', sans-serif;transform:scaleX(0.87);transform-origin:left top;letter-spacing:0.3px;">34</div>
<div class="t" style="left:301px;top:313.84px;font-size:12px;line-height:20px;color:#000;text-align:left;font-family:'Liberation Sans', sans-serif;transform:scaleX(0.87);transform-origin:left top;letter-spacing:0.3px;">150/2</div>
<div class="t" style="left:383px;top:313.84px;font-size:12px;line-height:20px;color:#000;text-align:left;font-family:'Liberation Sans', sans-serif;transform:scaleX(0.87);transform-origin:left top;letter-spacing:0.3px;">80%</div>
<div class="t" style="left:684px;top:313.84px;font-size:12px;line-height:20px;color:#000;text-align:left;font-family:'Liberation Sans', sans-serif;transform:scaleX(0.87);transform-origin:left top;letter-spacing:0.3px;">1,07</div>
<div class="t" style="left:34px;top:329.84px;font-size:12px;line-height:20px;color:#000;text-align:left;font-family:'Liberation Sans', sans-serif;transform:scaleX(0.87);transform-origin:left top;letter-spacing:0.3px;width:206.9px;overflow:hidden;">Салат овощной с колбасой</div>
<div class="t" style="left:218px;top:329.84px;font-size:12px;line-height:20px;color:#000;text-align:left;font-family:'Liberation Sans', sans-serif;transform:scaleX(0.87);transform-origin:left top;letter-spacing:0.3px;">39</div>
<div class="t" style="left:301px;top:329.84px;font-size:12px;line-height:20px;color:#000;text-align:left;font-family:'Liberation Sans', sans-serif;transform:scaleX(0.87);transform-origin:left top;letter-spacing:0.3px;">100/2</div>
<div class="t" style="left:383px;top:329.84px;font-size:12px;line-height:20px;color:#000;text-align:left;font-family:'Liberation Sans', sans-serif;transform:scaleX(0.87);transform-origin:left top;letter-spacing:0.3px;">80%</div>
<div class="t" style="left:684px;top:329.84px;font-size:12px;line-height:20px;color:#000;text-align:left;font-family:'Liberation Sans', sans-serif;transform:scaleX(0.87);transform-origin:left top;letter-spacing:0.3px;">0,94</div>
<div class="t" style="left:34px;top:345.84px;font-size:12px;line-height:20px;color:#000;text-align:left;font-family:'Liberation Sans', sans-serif;transform:scaleX(0.87);transform-origin:left top;letter-spacing:0.3px;width:206.9px;overflow:hidden;">Хлеб пшеничный (батон)</div>
<div class="t" style="left:218px;top:345.84px;font-size:12px;line-height:20px;color:#000;text-align:left;font-family:'Liberation Sans', sans-serif;transform:scaleX(0.87);transform-origin:left top;letter-spacing:0.3px;">24</div>
<div class="t" style="left:301px;top:345.84px;font-size:12px;line-height:20px;color:#000;text-align:left;font-family:'Liberation Sans', sans-serif;transform:scaleX(0.87);transform-origin:left top;letter-spacing:0.3px;">50</div>
<div class="t" style="left:383px;top:345.84px;font-size:12px;line-height:20px;color:#000;text-align:left;font-family:'Liberation Sans', sans-serif;transform:scaleX(0.87);transform-origin:left top;letter-spacing:0.3px;">80%</div>
<div class="t" style="left:684px;top:345.84px;font-size:12px;line-height:20px;color:#000;text-align:left;font-family:'Liberation Sans', sans-serif;transform:scaleX(0.87);transform-origin:left top;letter-spacing:0.3px;">0,23</div>
<div class="t" style="left:34px;top:361.84px;font-size:12px;line-height:20px;color:#000;text-align:left;font-family:'Liberation Sans', sans-serif;transform:scaleX(0.87);transform-origin:left top;letter-spacing:0.3px;width:206.9px;overflow:hidden;">Хлеб ржаной</div>
<div class="t" style="left:218px;top:361.84px;font-size:12px;line-height:20px;color:#000;text-align:left;font-family:'Liberation Sans', sans-serif;transform:scaleX(0.87);transform-origin:left top;letter-spacing:0.3px;">49</div>
<div class="t" style="left:301px;top:361.84px;font-size:12px;line-height:20px;color:#000;text-align:left;font-family:'Liberation Sans', sans-serif;transform:scaleX(0.87);transform-origin:left top;letter-spacing:0.3px;">50</div>
<div class="t" style="left:383px;top:361.84px;font-size:12px;line-height:20px;color:#000;text-align:left;font-family:'Liberation Sans', sans-serif;transform:scaleX(0.87);transform-origin:left top;letter-spacing:0.3px;">80%</div>
<div class="t" style="left:684px;top:361.84px;font-size:12px;line-height:20px;color:#000;text-align:left;font-family:'Liberation Sans', sans-serif;transform:scaleX(0.87);transform-origin:left top;letter-spacing:0.3px;">0,16</div>
<div class="t" style="left:34px;top:377.84px;font-size:12px;line-height:20px;color:#000;text-align:left;font-family:'Liberation Sans', sans-serif;transform:scaleX(0.87);transform-origin:left top;letter-spacing:0.3px;width:206.9px;overflow:hidden;">Кефир порционно</div>
<div class="t" style="left:218px;top:377.84px;font-size:12px;line-height:20px;color:#000;text-align:left;font-family:'Liberation Sans', sans-serif;transform:scaleX(0.87);transform-origin:left top;letter-spacing:0.3px;">21</div>
<div class="t" style="left:301px;top:377.84px;font-size:12px;line-height:20px;color:#000;text-align:left;font-family:'Liberation Sans', sans-serif;transform:scaleX(0.87);transform-origin:left top;letter-spacing:0.3px;">200</div>
<div class="t" style="left:383px;top:377.84px;font-size:12px;line-height:20px;color:#000;text-align:left;font-family:'Liberation Sans', sans-serif;transform:scaleX(0.87);transform-origin:left top;letter-spacing:0.3px;">80%</div>
<div class="t" style="left:684px;top:377.84px;font-size:12px;line-height:20px;color:#000;text-align:left;font-family:'Liberation Sans', sans-serif;transform:scaleX(0.87);transform-origin:left top;letter-spacing:0.3px;">0,65</div>
<div class="t" style="left:34px;top:393.84px;font-size:12px;line-height:20px;color:#000;text-align:left;font-family:'Liberation Sans', sans-serif;transform:scaleX(0.87);transform-origin:left top;letter-spacing:0.3px;width:206.9px;overflow:hidden;">Суп перловый с грибами со сметаной</div>
<div class="t" style="left:218px;top:393.84px;font-size:12px;line-height:20px;color:#000;text-align:left;font-family:'Liberation Sans', sans-serif;transform:scaleX(0.87);transform-origin:left top;letter-spacing:0.3px;">34</div>
<div class="t" style="left:301px;top:393.84px;font-size:12px;line-height:20px;color:#000;text-align:left;font-family:'Liberation Sans', sans-serif;transform:scaleX(0.87);transform-origin:left top;letter-spacing:0.3px;">250/30/2</div>
<div class="t" style="left:383px;top:393.84px;font-size:12px;line-height:20px;color:#000;text-align:left;font-family:'Liberation Sans', sans-serif;transform:scaleX(0.87);transform-origin:left top;letter-spacing:0.3px;">80%</div>
<div class="t" style="left:684px;top:393.84px;font-size:12px;line-height:20px;color:#000;text-align:left;font-family:'Liberation Sans', sans-serif;transform:scaleX(0.87);transform-origin:left top;letter-spacing:0.3px;">1,01</div>
<div class="t" style="left:34px;top:409.84px;font-size:12px;line-height:20px;color:#000;text-align:left;font-family:'Liberation Sans', sans-serif;transform:scaleX(0.87);transform-origin:left top;letter-spacing:0.3px;width:206.9px;overflow:hidden;">Колбаски по-могилёвски</div>
<div class="t" style="left:218px;top:409.84px;font-size:12px;line-height:20px;color:#000;text-align:left;font-family:'Liberation Sans', sans-serif;transform:scaleX(0.87);transform-origin:left top;letter-spacing:0.3px;">45</div>
<div class="t" style="left:301px;top:409.84px;font-size:12px;line-height:20px;color:#000;text-align:left;font-family:'Liberation Sans', sans-serif;transform:scaleX(0.87);transform-origin:left top;letter-spacing:0.3px;">100</div>
<div class="t" style="left:383px;top:409.84px;font-size:12px;line-height:20px;color:#000;text-align:left;font-family:'Liberation Sans', sans-serif;transform:scaleX(0.87);transform-origin:left top;letter-spacing:0.3px;">80%</div>
<div class="t" style="left:684px;top:409.84px;font-size:12px;line-height:20px;color:#000;text-align:left;font-family:'Liberation Sans', sans-serif;transform:scaleX(0.87);transform-origin:left top;letter-spacing:0.3px;">2,33</div>
<div class="t" style="left:34px;top:425.84px;font-size:12px;line-height:20px;color:#000;text-align:left;font-family:'Liberation Sans', sans-serif;transform:scaleX(0.87);transform-origin:left top;letter-spacing:0.3px;width:206.9px;overflow:hidden;">Компот из апельсинов</div>
<div class="t" style="left:218px;top:425.84px;font-size:12px;line-height:20px;color:#000;text-align:left;font-family:'Liberation Sans', sans-serif;transform:scaleX(0.87);transform-origin:left top;letter-spacing:0.3px;">71</div>
<div class="t" style="left:301px;top:425.84px;font-size:12px;line-height:20px;color:#000;text-align:left;font-family:'Liberation Sans', sans-serif;transform:scaleX(0.87);transform-origin:left top;letter-spacing:0.3px;">200</div>
<div class="t" style="left:383px;top:425.84px;font-size:12px;line-height:20px;color:#000;text-align:left;font-family:'Liberation Sans', sans-serif;transform:scaleX(0.87);transform-origin:left top;letter-spacing:0.3px;">80%</div>
<div class="t" style="left:684px;top:425.84px;font-size:12px;line-height:20px;color:#000;text-align:left;font-family:'Liberation Sans', sans-serif;transform:scaleX(0.87);transform-origin:left top;letter-spacing:0.3px;">0,51</div>
<div class="t" style="left:229px;top:445.84px;font-size:12px;line-height:20px;color:#FFFFFF;text-align:left;font-family:'Liberation Sans', sans-serif;transform:scaleX(0.87);transform-origin:left top;letter-spacing:0.3px;">Рассчитать...</div>
<div style="left:794px;top:266px;width:17px;height:197px;background:#F0F0F0;"></div>
<svg style="position:absolute;left:798px;top:272px" width="9" height="6" viewBox="0 0 9 6"><path d="M1.3 5 L4.5 1.8 L7.7 5" fill="none" stroke="#5A5A5A" stroke-width="2.1"/></svg>
<svg style="position:absolute;left:798px;top:452px" width="9" height="6" viewBox="0 0 9 6"><path d="M1.3 1 L4.5 4.2 L7.7 1" fill="none" stroke="#5A5A5A" stroke-width="2.1"/></svg>
<div style="left:795px;top:283px;width:15px;height:17px;background:#CDCDCD;"></div>
<div style="left:794px;top:266px;width:1px;height:198px;background:#FFFFFF;"></div>
<div style="left:2px;top:463px;width:793px;height:1px;background:#FFFFFF;"></div>
<svg style="position:absolute;left:7px;top:467px" width="7" height="9" viewBox="0 0 7 9"><path d="M5.3 1.3 L1.6 4.5 L5.3 7.7" fill="none" stroke="#5A5A5A" stroke-width="2.1"/></svg>
<div style="left:19px;top:464px;width:17px;height:15px;background:#CDCDCD;"></div>
<svg style="position:absolute;left:783px;top:467px" width="6" height="9" viewBox="0 0 6 9"><path d="M1 1.3 L4.2 4.5 L1 7.7" fill="none" stroke="#5A5A5A" stroke-width="2.1"/></svg>
<div style="left:3px;top:486px;width:807px;height:1px;background:#A0A0A0;"></div>
<div style="left:3px;top:486px;width:1px;height:24px;background:#A0A0A0;"></div>
<div style="left:4px;top:487px;width:806px;height:1px;background:#FFFFFF;"></div>
<div style="left:4px;top:487px;width:1px;height:23px;background:#FFFFFF;"></div>
<div style="left:809px;top:486px;width:1px;height:25px;background:#FFFFFF;"></div>
<div class="t" style="left:350px;top:489.19px;font-size:11px;line-height:20px;color:#000;text-align:left;font-family:'Liberation Sans', sans-serif;">Необходимые товары</div>
<div style="left:3px;top:510px;width:807px;height:1px;background:#FFFFFF;"></div>
<div style="left:3px;top:511px;width:807px;height:1px;background:#A0A0A0;"></div>
<div style="left:3px;top:511px;width:1px;height:203px;background:#A0A0A0;"></div>
<div style="left:4px;top:512px;width:1px;height:202px;background:#696969;"></div>
<div style="left:4px;top:512px;width:806px;height:1px;background:#696969;"></div>
<div style="left:809px;top:486px;width:1px;height:228px;background:#FFFFFF;"></div>
<div style="left:3px;top:713px;width:807px;height:1px;background:#FFFFFF;"></div>
<div style="left:5px;top:513px;width:226px;height:18px;background:#48C080;"></div>
<div style="left:5px;top:513px;width:1px;height:17px;background:#FFFFFF;"></div>
<div style="left:5px;top:513px;width:226px;height:1px;background:#FFFFFF;"></div>
<div style="left:6px;top:529px;width:224px;height:1px;background:#808080;"></div>
<div style="left:229px;top:514px;width:1px;height:16px;background:#808080;"></div>
<div style="left:230px;top:513px;width:1px;height:18px;background:#000;"></div>
<div style="left:5px;top:530px;width:226px;height:1px;background:#000;"></div>
<div class="t" style="left:6px;top:512.19px;font-size:11px;line-height:20px;color:#000;text-align:left;font-family:'Liberation Sans', sans-serif;width:211px;overflow:hidden;">Базовый товар</div>
<svg style="position:absolute;left:219px;top:520px" width="9" height="5" viewBox="0 0 9 5" shape-rendering="crispEdges"><path d="M0 0h9v1h-1v1h-1v1h-1v1h-1v1h-1v-1h-1v-1h-1v-1h-1v-1h-1z" fill="#000"/></svg>
<div style="left:231px;top:513px;width:46px;height:18px;background:#48C080;"></div>
<div style="left:231px;top:513px;width:1px;height:17px;background:#FFFFFF;"></div>
<div style="left:231px;top:513px;width:46px;height:1px;background:#FFFFFF;"></div>
<div style="left:232px;top:529px;width:44px;height:1px;background:#808080;"></div>
<div style="left:275px;top:514px;width:1px;height:16px;background:#808080;"></div>
<div style="left:276px;top:513px;width:1px;height:18px;background:#000;"></div>
<div style="left:231px;top:530px;width:46px;height:1px;background:#000;"></div>
<div class="t" style="left:232px;top:512.19px;font-size:11px;line-height:20px;color:#000;text-align:left;font-family:'Liberation Sans', sans-serif;width:31px;overflow:hidden;">Кол-во</div>
<svg style="position:absolute;left:265px;top:520px" width="9" height="5" viewBox="0 0 9 5" shape-rendering="crispEdges"><path d="M0 0h9v1h-1v1h-1v1h-1v1h-1v1h-1v-1h-1v-1h-1v-1h-1v-1h-1z" fill="#000"/></svg>
<div style="left:277px;top:513px;width:33px;height:18px;background:#48C080;"></div>
<div style="left:277px;top:513px;width:1px;height:17px;background:#FFFFFF;"></div>
<div style="left:277px;top:513px;width:33px;height:1px;background:#FFFFFF;"></div>
<div style="left:278px;top:529px;width:31px;height:1px;background:#808080;"></div>
<div style="left:308px;top:514px;width:1px;height:16px;background:#808080;"></div>
<div style="left:309px;top:513px;width:1px;height:18px;background:#000;"></div>
<div style="left:277px;top:530px;width:33px;height:1px;background:#000;"></div>
<div class="t" style="left:278px;top:512.19px;font-size:11px;line-height:20px;color:#000;text-align:left;font-family:'Liberation Sans', sans-serif;width:18px;overflow:hidden;">Жиры</div>
<svg style="position:absolute;left:298px;top:520px" width="9" height="5" viewBox="0 0 9 5" shape-rendering="crispEdges"><path d="M0 0h9v1h-1v1h-1v1h-1v1h-1v1h-1v-1h-1v-1h-1v-1h-1v-1h-1z" fill="#000"/></svg>
<div style="left:310px;top:513px;width:36px;height:18px;background:#48C080;"></div>
<div style="left:310px;top:513px;width:1px;height:17px;background:#FFFFFF;"></div>
<div style="left:310px;top:513px;width:36px;height:1px;background:#FFFFFF;"></div>
<div style="left:311px;top:529px;width:34px;height:1px;background:#808080;"></div>
<div style="left:344px;top:514px;width:1px;height:16px;background:#808080;"></div>
<div style="left:345px;top:513px;width:1px;height:18px;background:#000;"></div>
<div style="left:310px;top:530px;width:36px;height:1px;background:#000;"></div>
<div class="t" style="left:311px;top:512.19px;font-size:11px;line-height:20px;color:#000;text-align:left;font-family:'Liberation Sans', sans-serif;width:21px;overflow:hidden;">Влажность</div>
<svg style="position:absolute;left:334px;top:520px" width="9" height="5" viewBox="0 0 9 5" shape-rendering="crispEdges"><path d="M0 0h9v1h-1v1h-1v1h-1v1h-1v1h-1v-1h-1v-1h-1v-1h-1v-1h-1z" fill="#000"/></svg>
<div style="left:346px;top:513px;width:210px;height:18px;background:#6080FF;"></div>
<div style="left:346px;top:513px;width:1px;height:17px;background:#FFFFFF;"></div>
<div style="left:346px;top:513px;width:210px;height:1px;background:#FFFFFF;"></div>
<div style="left:347px;top:529px;width:208px;height:1px;background:#808080;"></div>
<div style="left:554px;top:514px;width:1px;height:16px;background:#808080;"></div>
<div style="left:555px;top:513px;width:1px;height:18px;background:#000;"></div>
<div style="left:346px;top:530px;width:210px;height:1px;background:#000;"></div>
<div class="t" style="left:347px;top:512.19px;font-size:11px;line-height:20px;color:#000;text-align:left;font-family:'Liberation Sans', sans-serif;width:195px;overflow:hidden;">Товар</div>
<svg style="position:absolute;left:544px;top:520px" width="9" height="5" viewBox="0 0 9 5" shape-rendering="crispEdges"><path d="M0 0h9v1h-1v1h-1v1h-1v1h-1v1h-1v-1h-1v-1h-1v-1h-1v-1h-1z" fill="#000"/></svg>
<div style="left:556px;top:513px;width:69px;height:18px;background:#6080FF;"></div>
<div style="left:556px;top:513px;width:1px;height:17px;background:#FFFFFF;"></div>
<div style="left:556px;top:513px;width:69px;height:1px;background:#FFFFFF;"></div>
<div style="left:557px;top:529px;width:67px;height:1px;background:#808080;"></div>
<div style="left:623px;top:514px;width:1px;height:16px;background:#808080;"></div>
<div style="left:624px;top:513px;width:1px;height:18px;background:#000;"></div>
<div style="left:556px;top:530px;width:69px;height:1px;background:#000;"></div>
<div class="t" style="left:557px;top:512.19px;font-size:11px;line-height:20px;color:#000;text-align:left;font-family:'Liberation Sans', sans-serif;width:54px;overflow:hidden;">Кол-во</div>
<svg style="position:absolute;left:613px;top:520px" width="9" height="5" viewBox="0 0 9 5" shape-rendering="crispEdges"><path d="M0 0h9v1h-1v1h-1v1h-1v1h-1v1h-1v-1h-1v-1h-1v-1h-1v-1h-1z" fill="#000"/></svg>
<div style="left:625px;top:513px;width:72px;height:18px;background:#8000FF;"></div>
<div style="left:625px;top:513px;width:1px;height:17px;background:#FFFFFF;"></div>
<div style="left:625px;top:513px;width:72px;height:1px;background:#FFFFFF;"></div>
<div style="left:626px;top:529px;width:70px;height:1px;background:#808080;"></div>
<div style="left:695px;top:514px;width:1px;height:16px;background:#808080;"></div>
<div style="left:696px;top:513px;width:1px;height:18px;background:#000;"></div>
<div style="left:625px;top:530px;width:72px;height:1px;background:#000;"></div>
<div class="t" style="left:626px;top:512.19px;font-size:11px;line-height:20px;color:#000;text-align:left;font-family:'Liberation Sans', sans-serif;width:57px;overflow:hidden;">В наличии</div>
<svg style="position:absolute;left:685px;top:520px" width="9" height="5" viewBox="0 0 9 5" shape-rendering="crispEdges"><path d="M0 0h9v1h-1v1h-1v1h-1v1h-1v1h-1v-1h-1v-1h-1v-1h-1v-1h-1z" fill="#000"/></svg>
<div style="left:697px;top:513px;width:87px;height:18px;background:#6080FF;"></div>
<div style="left:697px;top:513px;width:1px;height:17px;background:#FFFFFF;"></div>
<div style="left:697px;top:513px;width:87px;height:1px;background:#FFFFFF;"></div>
<div style="left:698px;top:529px;width:85px;height:1px;background:#808080;"></div>
<div style="left:782px;top:514px;width:1px;height:16px;background:#808080;"></div>
<div style="left:783px;top:513px;width:1px;height:18px;background:#000;"></div>
<div style="left:697px;top:530px;width:87px;height:1px;background:#000;"></div>
<div class="t" style="left:698px;top:512.19px;font-size:11px;line-height:20px;color:#000;text-align:left;font-family:'Liberation Sans', sans-serif;width:72px;overflow:hidden;">Цена покупна</div>
<svg style="position:absolute;left:772px;top:520px" width="9" height="5" viewBox="0 0 9 5" shape-rendering="crispEdges"><path d="M0 0h9v1h-1v1h-1v1h-1v1h-1v1h-1v-1h-1v-1h-1v-1h-1v-1h-1z" fill="#000"/></svg>
<div style="left:784px;top:513px;width:7px;height:18px;background:#6080FF;"></div>
<div style="left:784px;top:513px;width:1px;height:17px;background:#FFFFFF;"></div>
<div style="left:784px;top:513px;width:7px;height:1px;background:#FFFFFF;"></div>
<div style="left:785px;top:529px;width:5px;height:1px;background:#808080;"></div>
<div style="left:784px;top:530px;width:7px;height:1px;background:#000;"></div>
<div class="t" style="left:785px;top:512.19px;font-size:11px;line-height:20px;color:#000;text-align:left;font-family:'Liberation Sans', sans-serif;width:5px;overflow:hidden;">Цена</div>
<div style="left:5px;top:531px;width:786px;height:17px;background:#C1C1B0;"></div>
<div style="left:5px;top:548px;width:786px;height:1px;background:#C0C0C0;"></div>
<div style="left:5px;top:549px;width:786px;height:17px;background:#F6F2E6;"></div>
<div style="left:5px;top:566px;width:786px;height:1px;background:#C0C0C0;"></div>
<div style="left:5px;top:567px;width:786px;height:17px;background:#E6E6D6;"></div>
<div style="left:5px;top:584px;width:786px;height:1px;background:#C0C0C0;"></div>
<div style="left:5px;top:585px;width:786px;height:17px;background:#F6F2E6;"></div>
<div style="left:5px;top:602px;width:786px;height:1px;background:#C0C0C0;"></div>
<div style="left:5px;top:603px;width:786px;height:17px;background:#E6E6D6;"></div>
<div style="left:5px;top:620px;width:786px;height:1px;background:#C0C0C0;"></div>
<div style="left:5px;top:621px;width:786px;height:17px;background:#F6F2E6;"></div>
<div style="left:5px;top:638px;width:786px;height:1px;background:#C0C0C0;"></div>
<div style="left:5px;top:639px;width:786px;height:17px;background:#E6E6D6;"></div>
<div style="left:5px;top:656px;width:786px;height:1px;background:#C0C0C0;"></div>
<div style="left:5px;top:657px;width:786px;height:17px;background:#F6F2E6;"></div>
<div style="left:5px;top:674px;width:786px;height:1px;background:#C0C0C0;"></div>
<div style="left:5px;top:675px;width:786px;height:17px;background:#E6E6D6;"></div>
<div style="left:5px;top:692px;width:786px;height:1px;background:#C0C0C0;"></div>
<div style="left:5px;top:693px;width:786px;height:2px;background:#F6F2E6;"></div>
<div style="left:230px;top:531px;width:1px;height:164px;background:#C0C0C0;"></div>
<div style="left:276px;top:531px;width:1px;height:164px;background:#C0C0C0;"></div>
<div style="left:309px;top:531px;width:1px;height:164px;background:#C0C0C0;"></div>
<div style="left:345px;top:531px;width:1px;height:164px;background:#C0C0C0;"></div>
<div style="left:555px;top:531px;width:1px;height:164px;background:#C0C0C0;"></div>
<div style="left:624px;top:531px;width:1px;height:164px;background:#C0C0C0;"></div>
<div style="left:696px;top:531px;width:1px;height:164px;background:#C0C0C0;"></div>
<div style="left:783px;top:531px;width:1px;height:164px;background:#C0C0C0;"></div>
<div class="t" style="left:6px;top:530.19px;font-size:11px;line-height:20px;color:#000;text-align:left;font-family:'Liberation Sans', sans-serif;">Масло подсолнечное</div>
<div class="t" style="left:233px;top:530.19px;font-size:11px;line-height:20px;color:#000;text-align:left;font-family:'Liberation Sans', sans-serif;">1,3</div>
<div class="t" style="left:347px;top:530.19px;font-size:11px;line-height:20px;color:#000;text-align:left;font-family:'Liberation Sans', sans-serif;width:207px;overflow:hidden;">Масло подсолнечное раф Sunny Gold, 1л, ПЭТ</div>
<div class="t" style="left:556px;top:530.19px;font-size:11px;line-height:20px;color:#000;text-align:right;font-family:'Liberation Sans', sans-serif;width:66px;">1,413</div>
<div class="t" style="left:625px;top:530.19px;font-size:11px;line-height:20px;color:#000;text-align:right;font-family:'Liberation Sans', sans-serif;width:68px;">45</div>
<div class="t" style="left:697px;top:530.19px;font-size:11px;line-height:20px;color:#000;text-align:right;font-family:'Liberation Sans', sans-serif;width:84px;">3,95</div>
<div class="t" style="left:6px;top:548.19px;font-size:11px;line-height:20px;color:#000;text-align:left;font-family:'Liberation Sans', sans-serif;">Масло сливочное</div>
<div class="t" style="left:233px;top:548.19px;font-size:11px;line-height:20px;color:#000;text-align:left;font-family:'Liberation Sans', sans-serif;">1,435</div>
<div class="t" style="left:347px;top:548.19px;font-size:11px;line-height:20px;color:#000;text-align:left;font-family:'Liberation Sans', sans-serif;width:207px;overflow:hidden;">Масло сладкосливочное &quot;Крестьянское&quot; 72,5%</div>
<div class="t" style="left:556px;top:548.19px;font-size:11px;line-height:20px;color:#000;text-align:right;font-family:'Liberation Sans', sans-serif;width:66px;">7,9722</div>
<div class="t" style="left:625px;top:548.19px;font-size:11px;line-height:20px;color:#000;text-align:right;font-family:'Liberation Sans', sans-serif;width:68px;">80</div>
<div class="t" style="left:697px;top:548.19px;font-size:11px;line-height:20px;color:#000;text-align:right;font-family:'Liberation Sans', sans-serif;width:84px;">2,51</div>
<div class="t" style="left:6px;top:566.19px;font-size:11px;line-height:20px;color:#000;text-align:left;font-family:'Liberation Sans', sans-serif;">Картофель</div>
<div class="t" style="left:233px;top:566.19px;font-size:11px;line-height:20px;color:#000;text-align:left;font-family:'Liberation Sans', sans-serif;">11,49</div>
<div class="t" style="left:347px;top:566.19px;font-size:11px;line-height:20px;color:#000;text-align:left;font-family:'Liberation Sans', sans-serif;width:207px;overflow:hidden;">Картофель сежий продовольственный</div>
<div class="t" style="left:556px;top:566.19px;font-size:11px;line-height:20px;color:#000;text-align:right;font-family:'Liberation Sans', sans-serif;width:66px;">11,49</div>
<div class="t" style="left:625px;top:566.19px;font-size:11px;line-height:20px;color:#000;text-align:right;font-family:'Liberation Sans', sans-serif;width:68px;">266,5</div>
<div class="t" style="left:697px;top:566.19px;font-size:11px;line-height:20px;color:#000;text-align:right;font-family:'Liberation Sans', sans-serif;width:84px;">0,82</div>
<div class="t" style="left:6px;top:584.19px;font-size:11px;line-height:20px;color:#000;text-align:left;font-family:'Liberation Sans', sans-serif;">Свекла</div>
<div class="t" style="left:233px;top:584.19px;font-size:11px;line-height:20px;color:#000;text-align:left;font-family:'Liberation Sans', sans-serif;">5,347</div>
<div class="t" style="left:347px;top:584.19px;font-size:11px;line-height:20px;color:#000;text-align:left;font-family:'Liberation Sans', sans-serif;width:207px;overflow:hidden;">Свекла столовая свежая</div>
<div class="t" style="left:556px;top:584.19px;font-size:11px;line-height:20px;color:#000;text-align:right;font-family:'Liberation Sans', sans-serif;width:66px;">5,347</div>
<div class="t" style="left:625px;top:584.19px;font-size:11px;line-height:20px;color:#000;text-align:right;font-family:'Liberation Sans', sans-serif;width:68px;">29</div>
<div class="t" style="left:697px;top:584.19px;font-size:11px;line-height:20px;color:#000;text-align:right;font-family:'Liberation Sans', sans-serif;width:84px;">0,82</div>
<div class="t" style="left:6px;top:602.19px;font-size:11px;line-height:20px;color:#000;text-align:left;font-family:'Liberation Sans', sans-serif;">Петрушка свежая</div>
<div class="t" style="left:233px;top:602.19px;font-size:11px;line-height:20px;color:#000;text-align:left;font-family:'Liberation Sans', sans-serif;">0,27</div>
<div class="t" style="left:347px;top:602.19px;font-size:11px;line-height:20px;color:#000;text-align:left;font-family:'Liberation Sans', sans-serif;width:207px;overflow:hidden;">Петрушка свежая листовая</div>
<div class="t" style="left:556px;top:602.19px;font-size:11px;line-height:20px;color:#000;text-align:right;font-family:'Liberation Sans', sans-serif;width:66px;">0,27</div>
<div class="t" style="left:625px;top:602.19px;font-size:11px;line-height:20px;color:#000;text-align:right;font-family:'Liberation Sans', sans-serif;width:68px;">3,25</div>
<div class="t" style="left:697px;top:602.19px;font-size:11px;line-height:20px;color:#000;text-align:right;font-family:'Liberation Sans', sans-serif;width:84px;">12</div>
<div class="t" style="left:6px;top:620.19px;font-size:11px;line-height:20px;color:#000;text-align:left;font-family:'Liberation Sans', sans-serif;">Лук репчатый</div>
<div class="t" style="left:233px;top:620.19px;font-size:11px;line-height:20px;color:#000;text-align:left;font-family:'Liberation Sans', sans-serif;">3,725</div>
<div class="t" style="left:347px;top:620.19px;font-size:11px;line-height:20px;color:#000;text-align:left;font-family:'Liberation Sans', sans-serif;width:207px;overflow:hidden;">Лук репчатый свежий Спирит</div>
<div class="t" style="left:556px;top:620.19px;font-size:11px;line-height:20px;color:#000;text-align:right;font-family:'Liberation Sans', sans-serif;width:66px;">3,725</div>
<div class="t" style="left:625px;top:620.19px;font-size:11px;line-height:20px;color:#000;text-align:right;font-family:'Liberation Sans', sans-serif;width:68px;">75,5</div>
<div class="t" style="left:697px;top:620.19px;font-size:11px;line-height:20px;color:#000;text-align:right;font-family:'Liberation Sans', sans-serif;width:84px;">0,93</div>
<div class="t" style="left:6px;top:638.19px;font-size:11px;line-height:20px;color:#000;text-align:left;font-family:'Liberation Sans', sans-serif;">Морковь</div>
<div class="t" style="left:233px;top:638.19px;font-size:11px;line-height:20px;color:#000;text-align:left;font-family:'Liberation Sans', sans-serif;">8,712</div>
<div class="t" style="left:347px;top:638.19px;font-size:11px;line-height:20px;color:#000;text-align:left;font-family:'Liberation Sans', sans-serif;width:207px;overflow:hidden;">Морковь столовая свежая Бангор</div>
<div class="t" style="left:556px;top:638.19px;font-size:11px;line-height:20px;color:#000;text-align:right;font-family:'Liberation Sans', sans-serif;width:66px;">8,712</div>
<div class="t" style="left:625px;top:638.19px;font-size:11px;line-height:20px;color:#000;text-align:right;font-family:'Liberation Sans', sans-serif;width:68px;">60</div>
<div class="t" style="left:697px;top:638.19px;font-size:11px;line-height:20px;color:#000;text-align:right;font-family:'Liberation Sans', sans-serif;width:84px;">0,65</div>
<div class="t" style="left:6px;top:656.19px;font-size:11px;line-height:20px;color:#000;text-align:left;font-family:'Liberation Sans', sans-serif;">Капуста белокочанная</div>
<div class="t" style="left:233px;top:656.19px;font-size:11px;line-height:20px;color:#000;text-align:left;font-family:'Liberation Sans', sans-serif;">2,74</div>
<div class="t" style="left:347px;top:656.19px;font-size:11px;line-height:20px;color:#000;text-align:left;font-family:'Liberation Sans', sans-serif;width:207px;overflow:hidden;">Капуста белокочанная свежая</div>
<div class="t" style="left:556px;top:656.19px;font-size:11px;line-height:20px;color:#000;text-align:right;font-family:'Liberation Sans', sans-serif;width:66px;">2,74</div>
<div class="t" style="left:625px;top:656.19px;font-size:11px;line-height:20px;color:#000;text-align:right;font-family:'Liberation Sans', sans-serif;width:68px;">120</div>
<div class="t" style="left:697px;top:656.19px;font-size:11px;line-height:20px;color:#000;text-align:right;font-family:'Liberation Sans', sans-serif;width:84px;">0,44</div>
<div class="t" style="left:6px;top:674.19px;font-size:11px;line-height:20px;color:#000;text-align:left;font-family:'Liberation Sans', sans-serif;">Уксус 9%</div>
<div class="t" style="left:233px;top:674.19px;font-size:11px;line-height:20px;color:#000;text-align:left;font-family:'Liberation Sans', sans-serif;">0,072</div>
<div class="t" style="left:347px;top:674.19px;font-size:11px;line-height:20px;color:#000;text-align:left;font-family:'Liberation Sans', sans-serif;width:207px;overflow:hidden;">Уксус спиртовой, 9%</div>
<div class="t" style="left:556px;top:674.19px;font-size:11px;line-height:20px;color:#000;text-align:right;font-family:'Liberation Sans', sans-serif;width:66px;">0,072</div>
<div class="t" style="left:625px;top:674.19px;font-size:11px;line-height:20px;color:#000;text-align:right;font-family:'Liberation Sans', sans-serif;width:68px;">1</div>
<div class="t" style="left:697px;top:674.19px;font-size:11px;line-height:20px;color:#000;text-align:right;font-family:'Liberation Sans', sans-serif;width:84px;"></div>
<div style="left:791px;top:513px;width:17px;height:182px;background:#F0F0F0;"></div>
<svg style="position:absolute;left:795px;top:519px" width="9" height="6" viewBox="0 0 9 6"><path d="M1.3 5 L4.5 1.8 L7.7 5" fill="none" stroke="#5A5A5A" stroke-width="2.1"/></svg>
<svg style="position:absolute;left:795px;top:684px" width="9" height="6" viewBox="0 0 9 6"><path d="M1.3 1 L4.5 4.2 L7.7 1" fill="none" stroke="#5A5A5A" stroke-width="2.1"/></svg>
<div style="left:792px;top:530px;width:15px;height:17px;background:#CDCDCD;"></div>
<div style="left:5px;top:695px;width:804px;height:1px;background:#FFFFFF;"></div>
<svg style="position:absolute;left:10px;top:699px" width="7" height="9" viewBox="0 0 7 9"><path d="M5.3 1.3 L1.6 4.5 L5.3 7.7" fill="none" stroke="#5A5A5A" stroke-width="2.1"/></svg>
<div style="left:22px;top:696px;width:17px;height:15px;background:#CDCDCD;"></div>
<svg style="position:absolute;left:780px;top:699px" width="6" height="9" viewBox="0 0 6 9"><path d="M1 1.3 L4.2 4.5 L1 7.7" fill="none" stroke="#5A5A5A" stroke-width="2.1"/></svg>
<div style="left:1px;top:714px;width:811px;height:1px;background:#A0A0A0;"></div>
<div style="left:1px;top:715px;width:811px;height:1px;background:#A0A0A0;"></div>
<div style="left:1px;top:716px;width:811px;height:1px;background:#FFFFFF;"></div>
<div style="left:1px;top:718px;width:652px;height:1px;background:#A0A0A0;"></div>
<div style="left:654px;top:718px;width:1px;height:17px;background:#A0A0A0;"></div>
<div style="left:654px;top:718px;width:158px;height:1px;background:#A0A0A0;"></div>
<div style="left:652px;top:718px;width:1px;height:17px;background:#FFFFFF;"></div>
<div class="t" style="left:2px;top:717.19px;font-size:11px;line-height:20px;color:#000;text-align:left;font-family:'Liberation Sans', sans-serif;">Нет фильтрации</div>
<svg style="position:absolute;left:798px;top:721px" width="13" height="13" viewBox="0 0 13 13"><path d="M12 2 L2 12 M12 6 L6 12 M12 10 L10 12" stroke="#A0A0A0" stroke-width="1.2"/></svg>
<div style="left:811px;top:32px;width:1px;height:50px;background:#A0A0A0;"></div>
<div style="left:810px;top:239px;width:1px;height:247px;background:#FAFAFA;"></div>
<div style="left:811px;top:239px;width:1px;height:496px;background:#A0A0A0;"></div>
<div style="left:810px;top:486px;width:1px;height:228px;background:#A8A8A8;"></div>
<div style="left:794px;top:99px;width:1px;height:118px;background:#C0C0C0;"></div>
<div style="left:794px;top:217px;width:1px;height:16px;background:#000;"></div>
<div style="left:794px;top:283px;width:1px;height:181px;background:#FFFFFF;"></div>
<svg style="position:absolute;left:254px;top:38px" width="13" height="20" viewBox="0 0 13 20"><path d="M0.5 0.5 L0.5 16.5 L4.3 12.8 L6.9 18.6 L9.6 17.5 L7.2 12 H11.8 Z" fill="#fff" stroke="#000" stroke-width="1.1" stroke-linejoin="round"/></svg>
<div style="left:0px;top:0px;width:813px;height:1px;background:#2B2B2B;"></div>
<div style="left:0px;top:735px;width:813px;height:1px;background:#2B2B2B;"></div>
<div style="left:0px;top:0px;width:1px;height:736px;background:#2B2B2B;"></div>
<div style="left:812px;top:0px;width:1px;height:736px;background:#2B2B2B;"></div>
</body></html>
